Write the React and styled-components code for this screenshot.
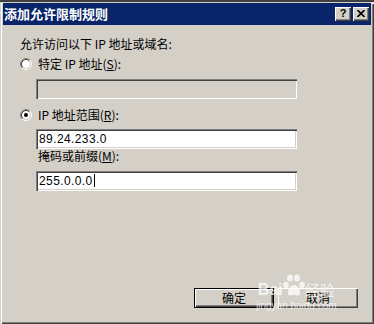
import React from 'react';
import styled, { createGlobalStyle } from 'styled-components';

const GlobalStyle = createGlobalStyle`
    html, body {
        margin: 0;
        padding: 0;
        background: #d4d0c8;
    }
    * {
        box-sizing: border-box;
    }
`;

const Window = styled.div`
    position: relative;
    width: 374px;
    height: 324px;
    display: flex;
    flex-direction: column;
    background: #d4d0c8;
    border-top: 2px solid #404040;
    padding: 1px 3px 3px 3px;
    box-shadow: inset 1px 1px #d4d0c8, inset 2px 2px #ffffff, inset -1px -1px #404040, inset -2px -2px #808080;
    font-family: "Noto Sans CJK SC", "Liberation Sans", sans-serif;
    font-size: 12px;
    color: #000;
    overflow: hidden;
`;

const TitleBar = styled.div`
    height: 22px;
    display: flex;
    align-items: center;
    padding: 0 2px 0 1px;
    background: #0a246a;
`;

const TitleText = styled.div`
    flex: 1;
    color: #fff;
    font-weight: bold;
    font-size: 13px;
    line-height: 16px;
    white-space: nowrap;
`;

const TitleButtons = styled.div`
    display: flex;
    gap: 2px;
`;

const TitleButton = styled.div`
    width: 16px;
    height: 14px;
    display: flex;
    align-items: center;
    justify-content: center;
    background: #d4d0c8;
    box-shadow: inset 1px 1px #ffffff, inset -1px -1px #404040, inset -2px -2px #808080;
    font-family: "Liberation Sans", sans-serif;
    font-weight: bold;
    font-size: 11px;
    line-height: 1;
    color: #000;
    padding-bottom: 1px;
`;

const Body = styled.div`
    flex: 1;
    display: flex;
    flex-direction: column;
    padding: 12px 0 0 17px;
`;

const Line = styled.div`
    height: 14px;
    line-height: 14px;
    white-space: nowrap;
    margin-top: ${p => p.$top || 0}px;
    margin-left: ${p => p.$indent || 0}px;
`;

const RadioRow = styled.label`
    display: flex;
    align-items: center;
    gap: 6px;
    height: 14px;
    line-height: 14px;
    margin-top: ${p => p.$top || 0}px;
    white-space: nowrap;
`;

const Field = styled.div`
    width: 261px;
    height: 20px;
    margin-top: ${p => p.$top || 0}px;
    margin-left: 16px;
    padding: 2px 3px 0 3px;
    background: ${p => (p.$disabled ? '#d4d0c8' : '#ffffff')};
    box-shadow: inset 1px 1px #808080, inset 2px 2px #404040, inset -1px -1px #ffffff, inset -2px -2px #d4d0c8;
    font-family: "Liberation Sans", sans-serif;
    font-size: 12px;
    letter-spacing: 0.4px;
    line-height: 17px;
    white-space: nowrap;
`;

const Caret = styled.span`
    display: inline-block;
    width: 1px;
    height: 13px;
    margin-left: 1px;
    vertical-align: -2px;
    background: #000;
`;

const Footer = styled.div`
    display: flex;
    justify-content: flex-end;
    gap: 4px;
    padding: 0 13px 13px 0;
`;

const Button = styled.button`
    width: 80px;
    height: 20px;
    padding: 0;
    border: ${p => (p.$default ? '1px solid #000' : 'none')};
    background: #d4d0c8;
    box-shadow: inset 1px 1px #ffffff, inset -1px -1px #404040, inset -2px -2px #808080;
    font-family: "Noto Sans CJK SC", sans-serif;
    font-size: 12px;
    line-height: 16px;
    color: #000;
`;

const Watermark = styled.div`
    position: absolute;
    left: 256px;
    top: 270px;
    display: flex;
    flex-direction: column;
    align-items: center;
    color: rgba(255, 255, 255, 0.75);
    pointer-events: none;
`;

const WatermarkTop = styled.div`
    display: flex;
    align-items: flex-end;
    height: 26px;
    font-family: "Liberation Sans", sans-serif;
    font-weight: bold;
    font-size: 16px;
    line-height: 16px;
`;

const WatermarkCn = styled.span`
    font-family: "Noto Sans CJK SC", sans-serif;
    font-weight: normal;
    font-size: 15px;
    line-height: 16px;
`;

const WatermarkUrl = styled.div`
    font-family: "Liberation Sans", sans-serif;
    font-size: 10px;
    line-height: 12px;
    margin-top: 2px;
`;

function Radio({ checked }) {
    return (
        <svg width="12" height="12" viewBox="0 0 12 12">
            <circle cx="6" cy="6" r="4" fill="#fff" />
            <path d="M2.11 9.89 A5.5 5.5 0 0 1 9.89 2.11" stroke="#808080" fill="none" />
            <path d="M9.89 2.11 A5.5 5.5 0 0 1 2.11 9.89" stroke="#ffffff" fill="none" />
            <path d="M2.82 9.18 A4.5 4.5 0 0 1 9.18 2.82" stroke="#404040" fill="none" />
            <path d="M9.18 2.82 A4.5 4.5 0 0 1 2.82 9.18" stroke="#d4d0c8" fill="none" />
            {checked && <circle cx="6" cy="6" r="2" fill="#000" />}
        </svg>
    );
}

function Paw() {
    return (
        <svg width="22" height="24" viewBox="0 0 22 24" fill="currentColor">
            <ellipse cx="7" cy="4" rx="3" ry="3.6" />
            <ellipse cx="14" cy="4" rx="3" ry="3.6" />
            <ellipse cx="3" cy="11" rx="2.8" ry="3.2" />
            <ellipse cx="19" cy="11" rx="2.8" ry="3.2" />
            <path d="M11 11 C7 11 4 17 5 20 C6 23 9 21 11 21 C13 21 16 23 17 20 C18 17 15 11 11 11 Z" />
        </svg>
    );
}

function App() {
    return (
        <>
            <GlobalStyle />
            <Window>
                <TitleBar>
                    <TitleText>添加允许限制规则</TitleText>
                    <TitleButtons>
                        <TitleButton>?</TitleButton>
                        <TitleButton>
                            <svg width="8" height="7" viewBox="0 0 8 7">
                                <path d="M0.5 0 L7.5 7 M7.5 0 L0.5 7" stroke="#000" strokeWidth="1.6" />
                            </svg>
                        </TitleButton>
                    </TitleButtons>
                </TitleBar>

                <Body>
                    <Line>允许访问以下 IP 地址或域名:</Line>
                    <RadioRow $top={6}>
                        <Radio />
                        <span>特定 IP 地址(<u>S</u>):</span>
                    </RadioRow>
                    <Field $top={8} $disabled />
                    <RadioRow $top={9}>
                        <Radio checked />
                        <span>IP 地址范围(<u>R</u>):</span>
                    </RadioRow>
                    <Field $top={7}>89.24.233.0</Field>
                    <Line $indent={18}>掩码或前缀(<u>M</u>):</Line>
                    <Field $top={8}>255.0.0.0<Caret /></Field>
                </Body>

                <Footer>
                    <Button $default>确定</Button>
                    <Button>取消</Button>
                </Footer>

                <Watermark>
                    <WatermarkTop>
                        <span>Bai</span>
                        <Paw />
                        <WatermarkCn>经验</WatermarkCn>
                    </WatermarkTop>
                    <WatermarkUrl>jingyan.baidu.com</WatermarkUrl>
                </Watermark>
            </Window>
        </>
    );
}

export default App;
